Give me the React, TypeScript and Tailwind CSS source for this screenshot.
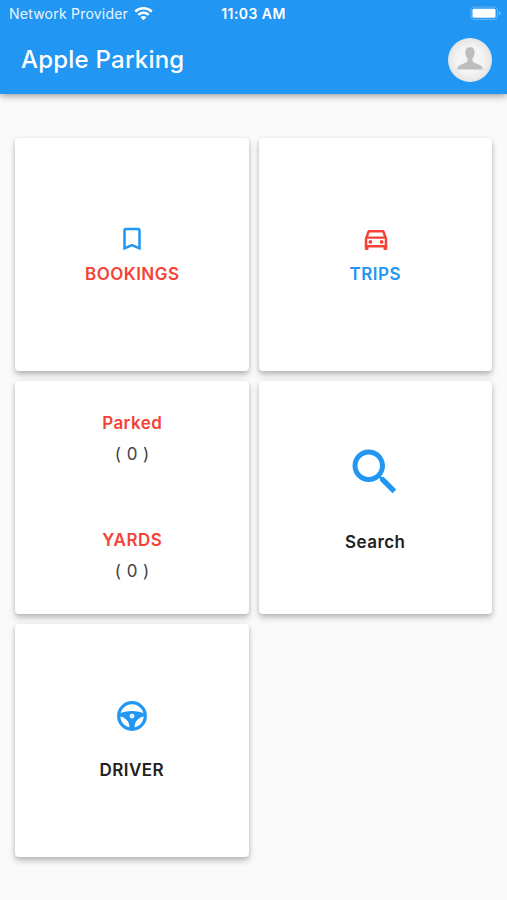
import type { ReactNode } from 'react';

function StatusBar() {
  return (
    <div className="grid h-7 grid-cols-3 items-center text-[14px] leading-none text-white">
      <div className="flex items-center gap-[6px] pl-[9px] whitespace-nowrap">
        <span className="tracking-[0.22px] text-white/90">Network Provider</span>
        <WifiIcon />
      </div>
      <span className="text-center font-semibold tracking-[0.45px]">11:03 AM</span>
      <div className="flex justify-end pr-[5px] pb-px">
        <BatteryIcon />
      </div>
    </div>
  );
}

function WifiIcon() {
  return (
    <svg width="19" height="15" viewBox="0 0 20 15" fill="none" stroke="white" strokeWidth="2.6" className="mb-[2px] shrink-0">
      <path d="M1.3 5.6a12.4 12.4 0 0 1 17.4 0" />
      <path d="M4.5 9a7.9 7.9 0 0 1 11 0" />
      <path d="M10 14.6 6.8 11.4a4.5 4.5 0 0 1 6.4 0z" fill="white" stroke="none" />
    </svg>
  );
}

function BatteryIcon() {
  return (
    <svg width="32" height="15" viewBox="0 0 32 15">
      <rect x="1" y="1" width="26.5" height="12.5" rx="3.5" fill="none" stroke="white" strokeOpacity="0.3" />
      <rect x="2.5" y="2.7" width="23" height="9" rx="1.5" fill="white" />
      <path d="M29 5v4.5c1-.4 1.6-1.3 1.6-2.25S30 5.4 29 5z" fill="white" fillOpacity="0.4" />
    </svg>
  );
}

function Avatar() {
  return (
    <svg width="44" height="44" viewBox="0 0 44 44">
      <defs>
        <radialGradient id="avatar">
          <stop offset="0.6" stopColor="#f4f4f4" />
          <stop offset="1" stopColor="#e4e4e4" />
        </radialGradient>
      </defs>
      <circle cx="22" cy="22" r="22" fill="url(#avatar)" />
      <path
        d="M22 9.2c-3.2 0-4.6 2.1-4.6 5 0 .9.1 1.5.3 2.2.3 1.6 1 3 1.8 3.9v2.8c-.4 1.3-2.1 1.9-4.3 2.7-3.6 1.2-5.9 2.1-5.9 5.7h25.4c0-3.6-2.3-4.500-5.900-5.700-2.200-.8-3.900-1.400-4.300-2.700v-2.800c.8-.9 1.500-2.300 1.800-3.900.2-.7.3-1.300.3-2.200 0-2.900-1.400-5-4.600-5z"
        fill="#bdbdbd"
      />
    </svg>
  );
}

function BookmarkIcon() {
  return (
    <svg width="30" height="30" viewBox="0 0 24 24" fill="#2196f3">
      <path d="M17 3H7c-1.1 0-2 .9-2 2v16l7-3 7 3V5c0-1.1-.9-2-2-2zm0 15-5-2.18L7 18V5h10v13z" />
    </svg>
  );
}

function CarIcon() {
  return (
    <svg width="30" height="30" viewBox="0 0 24 24" fill="#f44336">
      <path d="M18.92 5.01C18.72 4.42 18.16 4 17.5 4h-11c-.66 0-1.21.42-1.42 1.01L3 11v8c0 .55.45 1 1 1h1c.55 0 1-.45 1-1v-1h12v1c0 .55.45 1 1 1h1c.55 0 1-.45 1-1v-8l-2.08-5.99zM6.85 6h10.29l1.08 3.11H5.77L6.85 6zM19 16H5v-5h14v5z" />
      <circle cx="7.5" cy="13.5" r="1.5" />
      <circle cx="16.5" cy="13.5" r="1.5" />
    </svg>
  );
}

function SearchIcon() {
  return (
    <svg width="60" height="60" viewBox="0 0 24 24" fill="#2196f3">
      <path d="M15.5 14h-.79l-.28-.27C15.41 12.59 16 11.11 16 9.5 16 5.91 13.09 3 9.5 3S3 5.91 3 9.5 5.91 16 9.5 16c1.61 0 3.09-.59 4.23-1.57l.27.28v.79l5 4.99L20.49 19l-4.99-5zm-6 0C7.01 14 5 11.99 5 9.5S7.01 5 9.5 5 14 7.01 14 9.5 11.99 14 9.5 14z" />
    </svg>
  );
}

function SteeringWheelIcon() {
  return (
    <svg width="30" height="30" viewBox="0 0 30 30">
      <circle cx="15" cy="15" r="13.3" fill="none" stroke="#2196f3" strokeWidth="3.2" />
      <path
        fillRule="evenodd"
        fill="#2196f3"
        d="M2.5 12.8C6 10.9 10 10 15 10s9 .9 12.5 2.8v2.6c-5 .4-9 4-9.800 8.600V28h-5.400v-4c-.8-4.600-4.800-8.200-9.800-8.600zM15 12.700a2.400 2.400 0 1 0 0 4.800 2.400 2.400 0 1 0 0-4.800z"
      />
      <circle cx="15" cy="15.1" r="1" fill="#2196f3" fillOpacity="0.35" />
    </svg>
  );
}

function Card({ children }: { children: ReactNode }) {
  return (
    <div className="flex h-[233px] flex-col items-center rounded-[4px] bg-white text-[17px] leading-5 font-semibold tracking-[0.45px] text-[#212121] shadow-[0_4px_6px_rgba(0,0,0,0.22),0_1px_4px_rgba(0,0,0,0.1)]">
      {children}
    </div>
  );
}

function Counter({ label, count }: { label: string; count: number }) {
  return (
    <div className="flex flex-col items-center gap-[11px]">
      <span className="text-[#f44336]">{label}</span>
      <span className="font-normal text-[#424242]">( {count} )</span>
    </div>
  );
}

export default function App() {
  return (
    <div className="h-[900px] w-full overflow-hidden bg-[#fafafa] font-['Inter','Liberation_Sans',sans-serif]">
      <header className="h-[94px] bg-[#2196f3] shadow-[0_2px_7px_rgba(0,0,0,0.38)]">
        <StatusBar />
        <div className="flex h-[63px] items-center justify-between pr-[15px] pl-[21px]">
          <h1 className="text-[24px] font-[450] tracking-[0.22px] text-white">Apple Parking</h1>
          <Avatar />
        </div>
      </header>

      <main className="grid grid-cols-2 gap-[10px] px-[15px] pt-[44px]">
        <Card>
          <div className="mt-[86px]">
            <BookmarkIcon />
          </div>
          <span className="mt-[10px] pl-px text-[#f44336]">BOOKINGS</span>
        </Card>
        <Card>
          <div className="mt-[87px] pl-px">
            <CarIcon />
          </div>
          <span className="mt-[9px] text-[#2196f3]">TRIPS</span>
        </Card>
        <Card>
          <div className="mt-[32px] flex flex-col gap-[66px] pl-px">
            <Counter label="Parked" count={0} />
            <Counter label="YARDS" count={0} />
          </div>
        </Card>
        <Card>
          <div className="mt-[61px]">
            <SearchIcon />
          </div>
          <span className="mt-[30px]">Search</span>
        </Card>
        <Card>
          <div className="mt-[77px]">
            <SteeringWheelIcon />
          </div>
          <span className="mt-[29px]">DRIVER</span>
        </Card>
      </main>
    </div>
  );
}
